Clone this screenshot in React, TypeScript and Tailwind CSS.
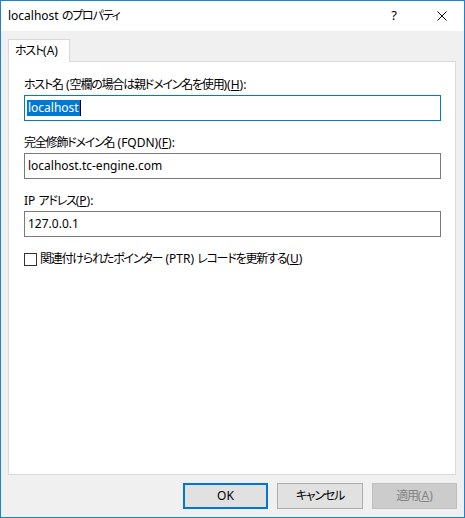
import React from "react";

const font = { fontFamily: '"Noto Sans", "Noto Sans CJK JP", sans-serif' };

function T({ s }: { s: string }) {
  const parts = s.split(/([\u3000-\u30ff\u3400-\u9fff\uff00-\uffef]+)/);
  return (
    <>
      {parts.map((p, i) =>
        i % 2 === 1 ? (
          <span key={i} className="tracking-[-1.2px]">
            {p}
          </span>
        ) : (
          <React.Fragment key={i}>{p}</React.Fragment>
        )
      )}
    </>
  );
}

function Field({ label, accel, value, focused }: { label: string; accel: string; value: string; focused?: boolean }) {
  return (
    <div className="flex flex-col">
      <div className="h-[16px] leading-[16px] text-[12px] text-black">
        <T s={label} />(<span className="underline">{accel}</span>):
      </div>
      <div
        className={
          "mt-[2px] h-[26px] w-[417px] bg-white flex items-center px-[2px] border " +
          (focused ? "border-[#0078d7]" : "border-[#7a7a7a]")
        }
      >
        {focused ? (
          <span className="flex items-center">
            <span className="bg-[#0078d7] text-white text-[12px] leading-[16px] px-[1px]">{value}</span>
            <span className="w-[1px] h-[16px] bg-black" />
          </span>
        ) : (
          <span className="text-[12px] leading-[16px] text-black px-[1px]">{value}</span>
        )}
      </div>
    </div>
  );
}

export default function App() {
  return (
    <div style={font} className="w-[465px] h-[518px] border border-[#1883d7] flex flex-col bg-[#f0f0f0] overflow-hidden [font-feature-settings:'palt']">
      <div className="h-[30px] bg-white flex items-center shrink-0">
        <span className="ml-[7px] text-[12px] text-black">
          <T s="localhost のプロパティ" />
        </span>
        <span className="ml-auto mr-[40px] text-[13px] text-black">?</span>
        <svg width="10" height="10" viewBox="0 0 10 10" className="mr-[17px]">
          <path d="M0.5 0.5 L9.5 9.5 M9.5 0.5 L0.5 9.5" stroke="#000" strokeWidth="1" />
        </svg>
      </div>
      <div className="flex-1 flex flex-col px-[7px] pt-[8px]">
        <div className="flex">
          <div className="relative z-10 h-[23px] w-[62px] bg-white border border-[#d9d9d9] border-b-0 flex items-center pl-[6px] -mb-[1px] text-[12px] text-black">
            <T s="ホスト (A)" />
          </div>
        </div>
        <div className="h-[414px] w-[448px] bg-white border border-[#d9d9d9] flex flex-col pl-[15px] pt-[15px]">
          <Field label="ホスト名 (空欄の場合は親ドメイン名を使用)" accel="H" value="localhost" focused />
          <div className="mt-[14px]">
            <Field label="完全修飾ドメイン名 (FQDN)" accel="F" value="localhost.tc-engine.com" />
          </div>
          <div className="mt-[14px]">
            <Field label="IP アドレス" accel="P" value="127.0.0.1" />
          </div>
          <div className="mt-[13px] flex items-center">
            <div className="w-[13px] h-[13px] border border-[#333] bg-white" />
            <span className="ml-[3px] text-[12px] text-black">
              <T s="関連付けられたポインター (PTR) レコードを更新する" />(<span className="underline">U</span>)
            </span>
          </div>
        </div>
        <div className="flex justify-end gap-[9px] mt-[8px] pr-[0px]">
          <button className="w-[85px] h-[26px] bg-[#e1e1e1] border-2 border-[#0078d7] text-[12px] text-black">OK</button>
          <button className="w-[86px] h-[26px] bg-[#e1e1e1] border border-[#adadad] text-[12px] text-black">
            <T s="キャンセル" />
          </button>
          <button className="w-[85px] h-[26px] bg-[#cccccc] border border-[#bfbfbf] text-[12px] text-[#838383]">
            <T s="適用" />(<span className="underline">A</span>)
          </button>
        </div>
      </div>
    </div>
  );
}
